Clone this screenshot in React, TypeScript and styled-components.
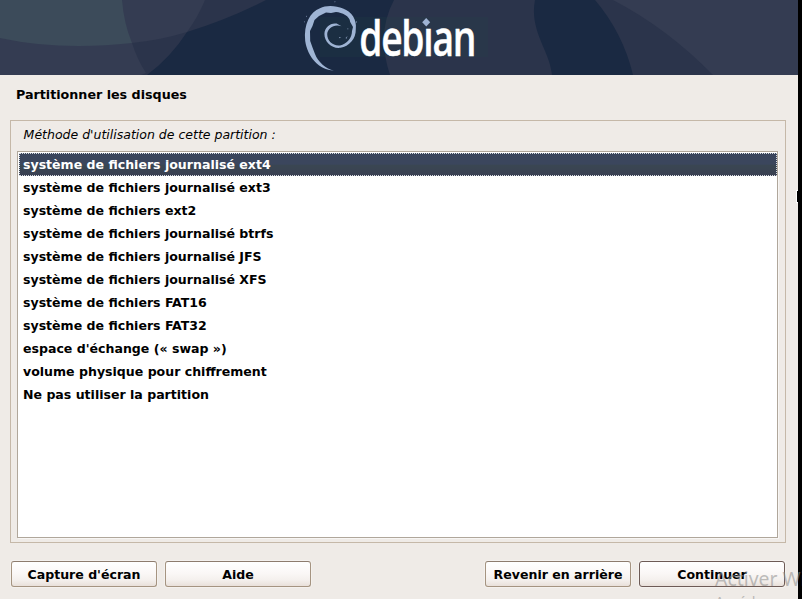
import React, { useState } from "react";
import styled, { createGlobalStyle, css } from "styled-components";

const GlobalStyle = createGlobalStyle`
  *, *::before, *::after { box-sizing: border-box; }
  body { margin: 0; background: #000; overflow: hidden; }
`;

const Screen = styled.div`
  position: relative;
  width: 802px;
  height: 599px;
  overflow: hidden;
  background: #000;
  font: bold 12.55px/23px "DejaVu Sans", sans-serif;
  color: #000;
`;

const Installer = styled.main`
  display: flex;
  flex-direction: column;
  width: 798px;
  height: 599px;
  background: #efebe7;
`;

const Banner = styled.svg`
  display: block;
  flex: none;
`;

const Title = styled.h1`
  margin: 0;
  padding: 8px 16px 0;
  height: 45px;
  font: inherit;
  font-size: 12.7px;
`;

const Frame = styled.section`
  display: flex;
  flex-direction: column;
  width: 776px;
  height: 423px;
  margin-left: 10px;
  padding: 0 6px 4px;
  border: 1px solid #c5b8a8;
`;

const Prompt = styled.p`
  margin: 0;
  padding: 2px 6.6px 0;
  height: 30px;
  font-weight: normal;
  font-style: italic;
  font-size: 12.5px;
`;

const List = styled.ul`
  flex: 1;
  margin: 0;
  padding: 1px 0;
  width: 761px;
  list-style: none;
  background: #fff;
  border: 1px solid #b0a79b;
  box-shadow: 1px 1px 0 #f8f6f4;
`;

const Option = styled.li<{ $selected: boolean }>`
  height: 23px;
  padding: 0 5px;
  white-space: nowrap;
  ${(p) =>
    p.$selected &&
    css`
      margin: 0 0 0 1px;
      padding: 0 3px;
      color: #fff;
      line-height: 21px;
      border: 1px dotted #d8dce2;
      background: linear-gradient(#3b465d 0 48%, #3a4652 54%, #3a4052) border-box;
    `}
`;

const Actions = styled.footer`
  display: flex;
  gap: 8px;
  margin-top: 18px;
  padding: 0 13px 0 11px;
`;

const Spacer = styled.div`
  flex: 1;
`;

const Button = styled.button<{ $primary?: boolean }>`
  width: 146px;
  height: 26px;
  padding: 1px 0 0;
  font: inherit;
  line-height: 22px;
  color: #000;
  border: 1px solid;
  border-color: ${(p) => (p.$primary ? "#6d5b56" : "#8d7c6e #a59481 #a59481")};
  border-radius: 3px;
  background: linear-gradient(#fff 0, #faf7f6 48%, #f4f0ed 75%, #e9e0da);
  box-shadow: 0 0 0 1px #f4f1ee;
`;

const Watermark = styled.div`
  position: absolute;
  left: 715px;
  top: 566px;
  width: 160px;
  color: rgba(145, 145, 145, 0.58);
  font: 19.4px/25px "Noto Sans", sans-serif;
  white-space: nowrap;
  pointer-events: none;
`;

const WatermarkDetail = styled.div`
  font-size: 14.6px;
  line-height: 20px;
`;

const Cursor = styled.div`
  position: absolute;
  left: 796px;
  top: 190px;
  width: 2px;
  height: 13px;
  background: #000;
  border: solid #fff;
  border-width: 1px 0 1px 1px;
`;

const options = [
  "système de fichiers journalisé ext4",
  "système de fichiers journalisé ext3",
  "système de fichiers ext2",
  "système de fichiers journalisé btrfs",
  "système de fichiers journalisé JFS",
  "système de fichiers journalisé XFS",
  "système de fichiers FAT16",
  "système de fichiers FAT32",
  "espace d'échange (« swap »)",
  "volume physique pour chiffrement",
  "Ne pas utiliser la partition",
];

function DebianBanner() {
  return (
    <Banner width="798" height="75" viewBox="0 0 798 75" role="img" aria-label="debian">
      <defs>
        {/* Leaves out the round dot of the i; a diamond takes its place. */}
        <clipPath id="wordmark">
          <path d="M350 0H418V27H434V0H490V75H350Z" />
        </clipPath>
      </defs>
      <path fill="#1a2942" d="M0 0H798V75H0Z" />
      <path fill="#2b344b" d="M0 0H266Q229 19 187 32Q171 57 147 75H0Z" />
      <path fill="#343c52" d="M0 0H205Q198 17 187 32Q161 40 132 43Q137 59 146 73L141 75H0Z" />
      <path fill="#3c4b5a" d="M0 0H122Q124 24 132 43Q60 51 0 38Z" />
      <path fill="#2b344b" d="M394 0Q376 33 390 75H552C550 51 529 31 535 0Z" />
      <path fill="#2b344b" d="M595 0Q623 33 633 75H798V0Z" />
      <path fill="#343c52" d="M613 0Q667 28 713 75H798V0Z" />
      <path fill="#244446" opacity=".2" d="M320 17H488V57H320Z" />
      <g fill="#9fb4d4">
        <path d="M334 70.6C319 70 307.5 57 305.2 41C303.5 24 310 12 320 8.2C326 5 336 5.4 343 8.6C352 12 357 20 355.8 29C356.2 39 349 46.4 340.5 47.8C332 49 324.4 42 324.4 34C324.6 27 330.6 22.6 336.6 23.6L341.5 26.2C334 23.8 327.8 28 327.2 34C327 41 333 46.2 340 45.4C347 44 352 38 352 31L353 27L350.2 22C349.8 16 342 12.5 336 12L331 13L326 12.4L319 16L314.5 20L312.5 26L310 31L310.2 41L312.7 48L315 54C318 62 326 69 334 70.6Z" />
        <path
          opacity=".7"
          d="M356 21l1.2 1-1.2 1zM347 29l1.2-1v1.6zM339 37l2.4.5-2.4.7zM345.5 38l2-2-1 3zM306 16.5l1-1v1.8zM304 22l1-1v1.5zM334.5 1l1.2.8-1 .6z"
        />
        <path d="M426.2 18L430.2 22.3L426.2 26.6L422.2 22.3Z" />
      </g>
      <text
        x="359.2"
        y="55.7"
        textLength="116"
        lengthAdjust="spacingAndGlyphs"
        fill="#fff"
        clipPath="url(#wordmark)"
        fontFamily="Open Sans, sans-serif"
        fontSize="48"
        fontWeight="600"
        letterSpacing="-1.6"
        stroke="#fff"
        strokeWidth=".4"
      >
        debian
      </text>
    </Banner>
  );
}

export default function App() {
  const [selected, setSelected] = useState(0);
  return (
    <>
      <GlobalStyle />
      <Screen>
        <Installer>
          <DebianBanner />
          <Title>Partitionner les disques</Title>
          <Frame>
            <Prompt>Méthode d'utilisation de cette partition :</Prompt>
            <List role="listbox">
              {options.map((label, i) => (
                <Option
                  key={label}
                  role="option"
                  aria-selected={i === selected}
                  $selected={i === selected}
                  onClick={() => setSelected(i)}
                >
                  {label}
                </Option>
              ))}
            </List>
          </Frame>
          <Actions>
            <Button>Capture d'écran</Button>
            <Button>Aide</Button>
            <Spacer />
            <Button>Revenir en arrière</Button>
            <Button $primary>Continuer</Button>
          </Actions>
        </Installer>
        <Cursor />
        <Watermark>
          Activer Windows
          <WatermarkDetail>Accédez aux paramètres</WatermarkDetail>
        </Watermark>
      </Screen>
    </>
  );
}
